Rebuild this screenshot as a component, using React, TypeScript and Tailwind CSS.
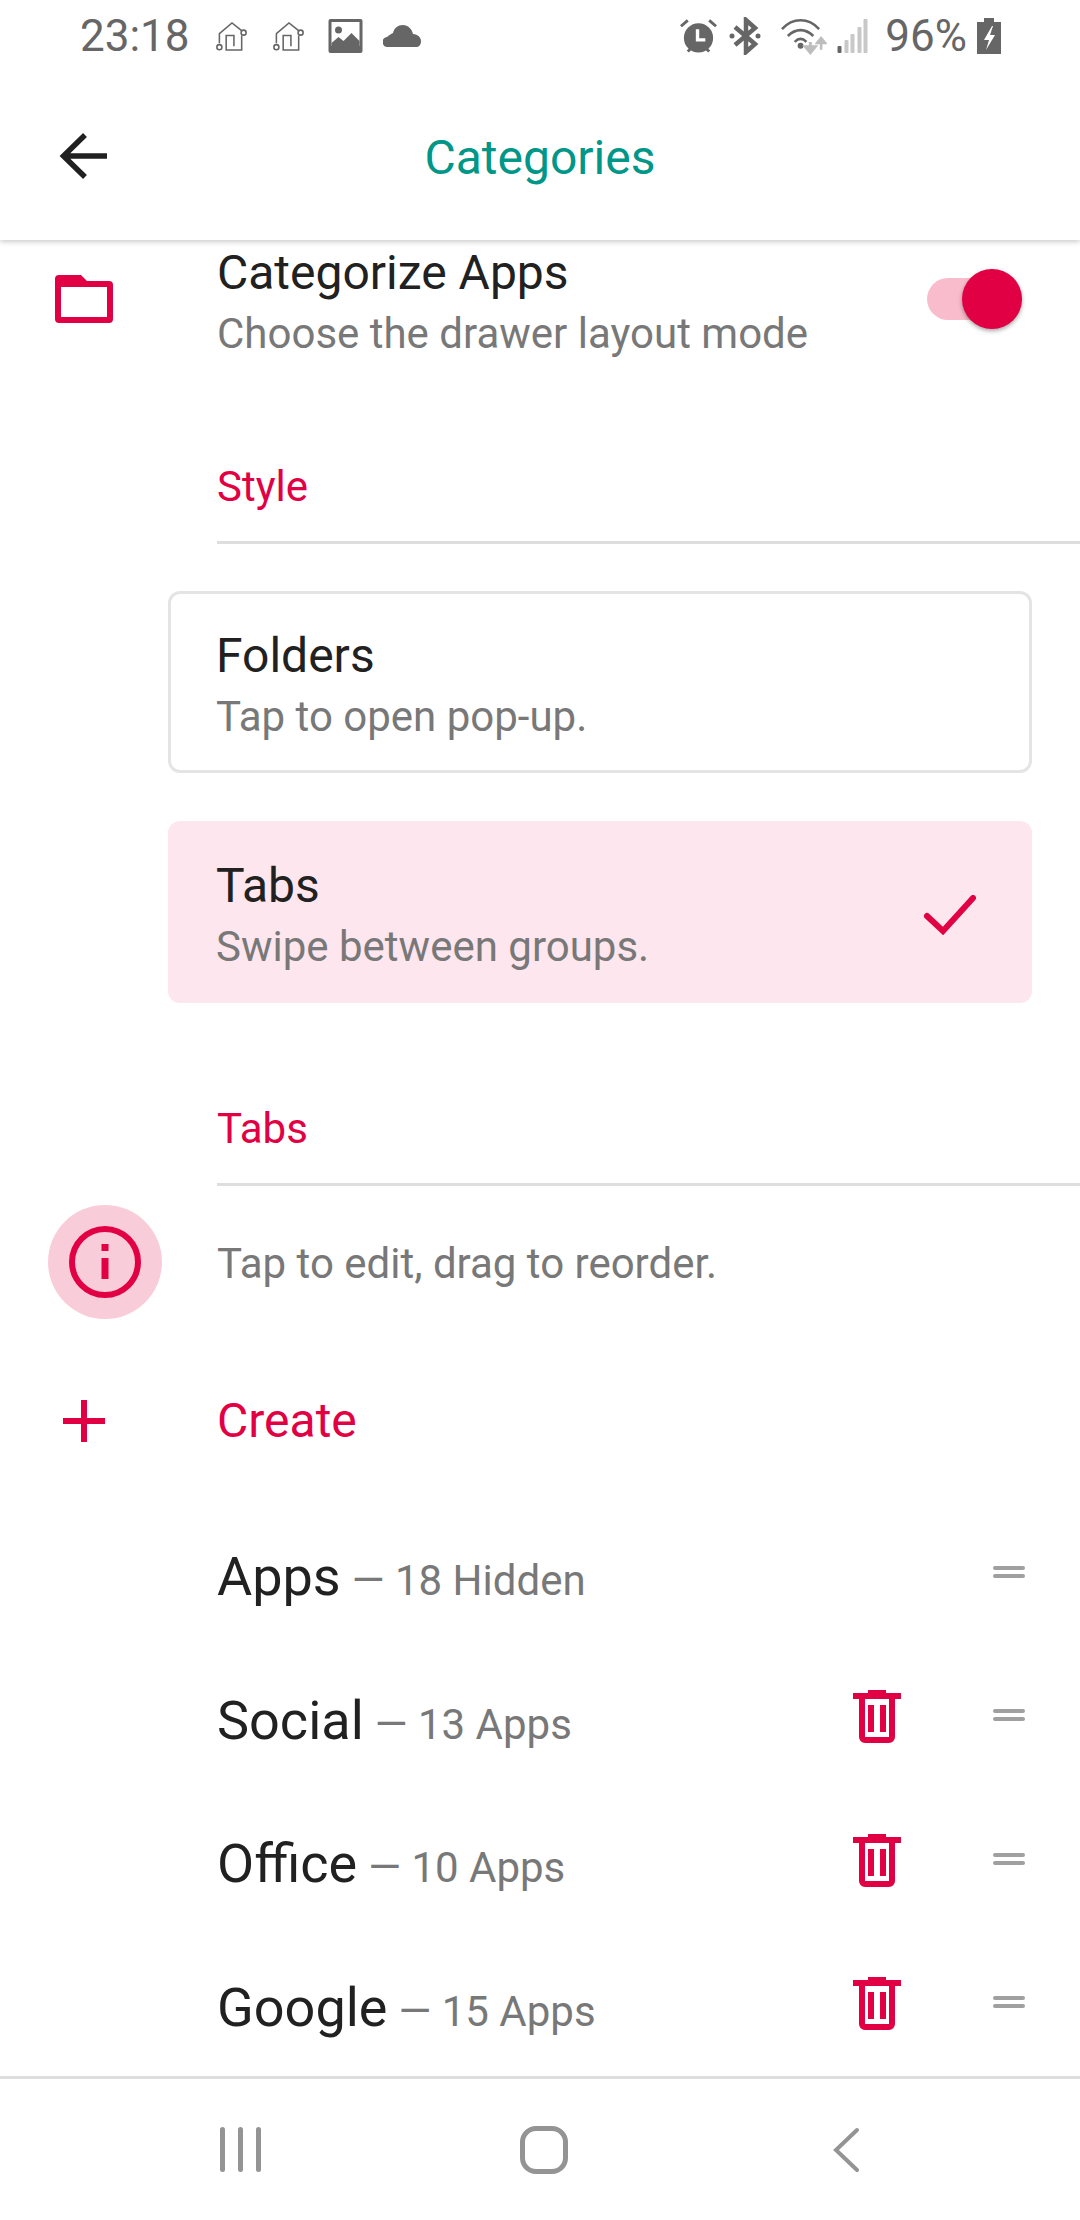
const FONT = { fontFamily: 'Roboto, sans-serif' };

function HomeGlyph({ className }: { className?: string }) {
  return (
    <svg width="33" height="31" viewBox="0 0 33 32" fill="none" stroke="#666" strokeWidth="1.6" className={className}>
      <path d="M4 23V13L17 2l10 8" />
      <circle cx="29" cy="12" r="2.6" />
      <circle cx="4" cy="27" r="2.6" />
      <path d="M27 15v15H11V15h8v11" />
    </svg>
  );
}

function StatusLeft() {
  return (
    <div className="flex items-center">
      <span className="text-[44px] leading-none text-[#666] w-[135px]">23:18</span>
      <HomeGlyph />
      <HomeGlyph className="ml-[24px]" />
      <svg width="35" height="34" viewBox="0 0 34 34" className="ml-[23px]">
        <rect width="34" height="34" rx="2" fill="#666" />
        <rect x="3" y="3" width="28" height="24" fill="#fff" />
        <circle cx="10" cy="11" r="3.5" fill="#666" />
        <path d="M3 24l7-6 5 4 8-8 8 8v5H3z" fill="#666" />
      </svg>
      <svg width="38" height="22" viewBox="0 0 38 22" className="ml-[20px]">
        <path d="M5 22a5 5 0 0 1-1-10C6 10 8 9 10 8c1-5 5-8 10-8 5 0 9 4 10 9 4 0 8 3 8 7 0 4-2 6-5 6z" fill="#666" />
      </svg>
    </div>
  );
}

function StatusRight() {
  return (
    <div className="flex items-center">
      <svg width="37" height="36" viewBox="0 0 38 36">
        <path d="M1 8l7-6M37 8l-7-6M8 34l4-4M30 34l-4-4" stroke="#666" strokeWidth="3" />
        <circle cx="19" cy="20" r="15" fill="#666" />
        <path d="M18 11v11h8" stroke="#fff" strokeWidth="3.5" fill="none" />
      </svg>
      <svg width="32" height="38" viewBox="0 0 32 38" className="ml-[12px]">
        <path d="M6 10l20 17-9 8V3l9 8L6 28" stroke="#666" strokeWidth="4.5" fill="none" />
        <circle cx="3" cy="19" r="2.5" fill="#666" />
        <circle cx="29" cy="19" r="2.5" fill="#666" />
      </svg>
      <svg width="47" height="37" viewBox="0 0 48 37" className="ml-[19px]">
        <path d="M2 11c11-12 27-12 38 0" stroke="#666" strokeWidth="2.6" fill="none" />
        <path d="M8 18c8-8 18-8 26 0" stroke="#666" strokeWidth="2.6" fill="none" />
        <path d="M15 24c4-4 8-4 12 0" stroke="#666" strokeWidth="2.6" fill="none" />
        <circle cx="21" cy="28" r="3" fill="#666" />
        <path d="M31 24v8M26 29l5 6 5-6z" stroke="#bdbdbd" strokeWidth="3" fill="#bdbdbd" />
        <path d="M42 32v-9M38 25l4-5 4 5z" stroke="#bdbdbd" strokeWidth="2.6" fill="#bdbdbd" />
      </svg>
      <svg width="31" height="34" viewBox="0 0 30 34" className="ml-[10px]">
        <rect x="0" y="27" width="4" height="7" rx="1" fill="#666" />
        <rect x="7" y="21" width="4" height="13" rx="1" fill="#c8c8c8" />
        <rect x="13" y="15" width="4" height="19" rx="1" fill="#c8c8c8" />
        <rect x="20" y="8" width="4" height="26" rx="1" fill="#c8c8c8" />
        <rect x="26" y="0" width="4" height="34" rx="1" fill="#c8c8c8" />
      </svg>
      <span className="text-[44px] leading-none text-[#666] ml-[17px]">96%</span>
      <svg width="24" height="36" viewBox="0 0 24 36" className="ml-[10px]">
        <path d="M7 0h10v4h7v32H0V4h7z" fill="#666" />
        <path d="M15 8l-8 14h5l-3 10 9-15h-5l3-9z" fill="#fff" />
      </svg>
    </div>
  );
}

function SectionLabel({ label }: { label: string }) {
  return (
    <div className="ml-[217px] border-b-[3px] border-[#dedede] h-[87px]">
      <p className="text-[42px] leading-[60px] text-[#e20044]">{label}</p>
    </div>
  );
}

function StyleCard({ title, subtitle, selected }: { title: string; subtitle: string; selected?: boolean }) {
  return (
    <div
      className={`ml-[168px] w-[864px] h-[182px] rounded-[12px] flex items-center justify-between pl-[48px] pr-[56px] ${
        selected ? 'bg-[#fde6ed]' : 'border-[3px] border-[#e4e4e4]'
      }`}
    >
      <div className={selected ? 'pt-[7px]' : '-ml-[3px] pt-[7px]'}>
        <p className="text-[48px] leading-[61px] text-[#212121]">{title}</p>
        <p className="text-[42px] leading-[61px] text-[#787878]">{subtitle}</p>
      </div>
      {selected && (
        <svg width="52" height="40" viewBox="0 0 52 40" fill="none" className="mt-[6px]">
          <path d="M3 21l16 15L49 3" stroke="#e20044" strokeWidth="6" strokeLinecap="round" />
        </svg>
      )}
    </div>
  );
}

function CategoryRow({ name, meta, removable = true }: { name: string; meta: string; removable?: boolean }) {
  return (
    <div className="h-[143.5px] flex items-center pl-[217px] pr-[55px]">
      <p className="flex-1 flex items-baseline -mt-[2px]">
        <span className="text-[54px] text-[#212121]">{name}</span>
        <span className="text-[42px] text-[#787878] ml-[11px]">— {meta}</span>
      </p>
      {removable && (
        <svg width="48" height="54" viewBox="0 0 48 54" className="-mt-[8px]">
          <path d="M15 3V0h18v3h15v6H0V3z" fill="#e20044" />
          <path d="M6 9v38a6 6 0 0 0 6 6h24a6 6 0 0 0 6-6V9h-6v38H12V9z" fill="#e20044" />
          <rect x="15" y="15" width="6" height="27" fill="#e20044" />
          <rect x="27" y="15" width="6" height="27" fill="#e20044" />
        </svg>
      )}
      <div className="w-[32px] ml-[92px] flex flex-col gap-[4px] -mt-[12px]">
        <div className="h-[4px] rounded-full bg-[#a0a0a0]" />
        <div className="h-[4px] rounded-full bg-[#a0a0a0]" />
      </div>
    </div>
  );
}

export default function App() {
  return (
    <div className="w-[1080px] h-[2220px] flex flex-col bg-white overflow-hidden" style={FONT}>
      {/* Status bar */}
      <div className="h-[72px] pl-[80px] pr-[79px] flex items-center justify-between shrink-0 relative z-20 bg-white">
        <StatusLeft />
        <StatusRight />
      </div>

      {/* App bar */}
      <div className="h-[168px] shrink-0 flex items-center relative z-10 shadow-[0_2px_5px_rgba(0,0,0,0.2)] bg-white">
        <svg width="50" height="48" viewBox="0 0 50 48" fill="none" className="ml-[59px]">
          <path d="M48 24H5M26 3L4.500 24 26 45" stroke="#212121" strokeWidth="5.500" />
        </svg>
        <h1 className="absolute inset-x-0 text-center text-[48px] pt-[3px] text-[#009688]">Categories</h1>
      </div>

      <main className="flex-1 overflow-hidden">
        {/* Categorize toggle */}
        <div className="flex items-center h-[122px] -mt-[2px] pr-[58px]">
          <div className="w-[217px] flex shrink-0 pl-[54px]">
            <svg width="60" height="48" viewBox="0 0 58 48">
              <path d="M4 0h22l6 6h22a4 4 0 0 1 4 4v34a4 4 0 0 1-4 4H4a4 4 0 0 1-4-4V4a4 4 0 0 1 4-4zm2 6v36h46V12H6z" fill="#e20044" fillRule="evenodd" />
            </svg>
          </div>
          <div className="flex-1 pt-[8px]">
            <p className="text-[48px] leading-[61px] text-[#212121]">Categorize Apps</p>
            <p className="text-[42px] leading-[61px] text-[#787878]">Choose the drawer layout mode</p>
          </div>
          <div className="w-[95px] h-[42px] rounded-full bg-[#f8bccd] flex items-center justify-end">
            <div className="w-[60px] h-[60px] shrink-0 rounded-full bg-[#e20044] shadow-[0_2px_4px_rgba(0,0,0,0.35)]" />
          </div>
        </div>

        <div className="mt-[97px]">
          <SectionLabel label="Style" />
        </div>
        <div className="mt-[47px] flex flex-col gap-[48px]">
          <StyleCard title="Folders" subtitle="Tap to open pop-up." />
          <StyleCard title="Tabs" subtitle="Swipe between groups." selected />
        </div>

        <div className="mt-[96px]">
          <SectionLabel label="Tabs" />
        </div>

        {/* Hint */}
        <div className="flex items-center mt-[19px] h-[114px]">
          <div className="ml-[48px] w-[114px] h-[114px] rounded-full bg-[#f9ccd9] flex items-center justify-center shrink-0">
            <svg width="72" height="72" viewBox="0 0 72 72" fill="none">
              <circle cx="36" cy="36" r="33" stroke="#e20044" strokeWidth="6" />
              <rect x="32.500" y="18" width="7" height="7" fill="#e20044" />
              <rect x="32.500" y="32" width="7" height="21" fill="#e20044" />
            </svg>
          </div>
          <p className="ml-[55px] pt-[3px] text-[42px] text-[#787878]">Tap to edit, drag to reorder.</p>
        </div>

        {/* Create */}
        <div className="flex items-center mt-[80px] h-[44px]">
          <div className="ml-[63px] w-[42px] h-[42px]">
            <svg width="42" height="42" viewBox="0 0 42 42">
              <path d="M18 0h6v18h18v6H24v18h-6V24H0v-6h18z" fill="#e20044" />
            </svg>
          </div>
          <p className="ml-[112px] text-[48px] leading-none text-[#e20044]">Create</p>
        </div>

        {/* Categories */}
        <div className="mt-[63px]">
          <CategoryRow name="Apps" meta="18 Hidden" removable={false} />
          <CategoryRow name="Social" meta="13 Apps" />
          <CategoryRow name="Office" meta="10 Apps" />
          <CategoryRow name="Google" meta="15 Apps" />
        </div>
      </main>

      {/* Nav bar */}
      <div className="h-[144px] shrink-0 border-t-[3px] border-[#dedede] flex items-center justify-between pl-[220px] pr-[220px]">
        <div className="flex gap-[13px]">
          <div className="w-[5px] h-[45px] rounded-full bg-[#949494]" />
          <div className="w-[5px] h-[45px] rounded-full bg-[#949494]" />
          <div className="w-[5px] h-[45px] rounded-full bg-[#949494]" />
        </div>
        <div className="w-[48px] h-[48px] mr-[6px] rounded-[16px] border-[5px] border-[#949494]" />
        <svg width="28" height="46" viewBox="0 0 28 46" fill="none">
          <path d="M25 3L4 23l21 20" stroke="#949494" strokeWidth="4" strokeLinecap="round" />
        </svg>
      </div>
    </div>
  );
}
